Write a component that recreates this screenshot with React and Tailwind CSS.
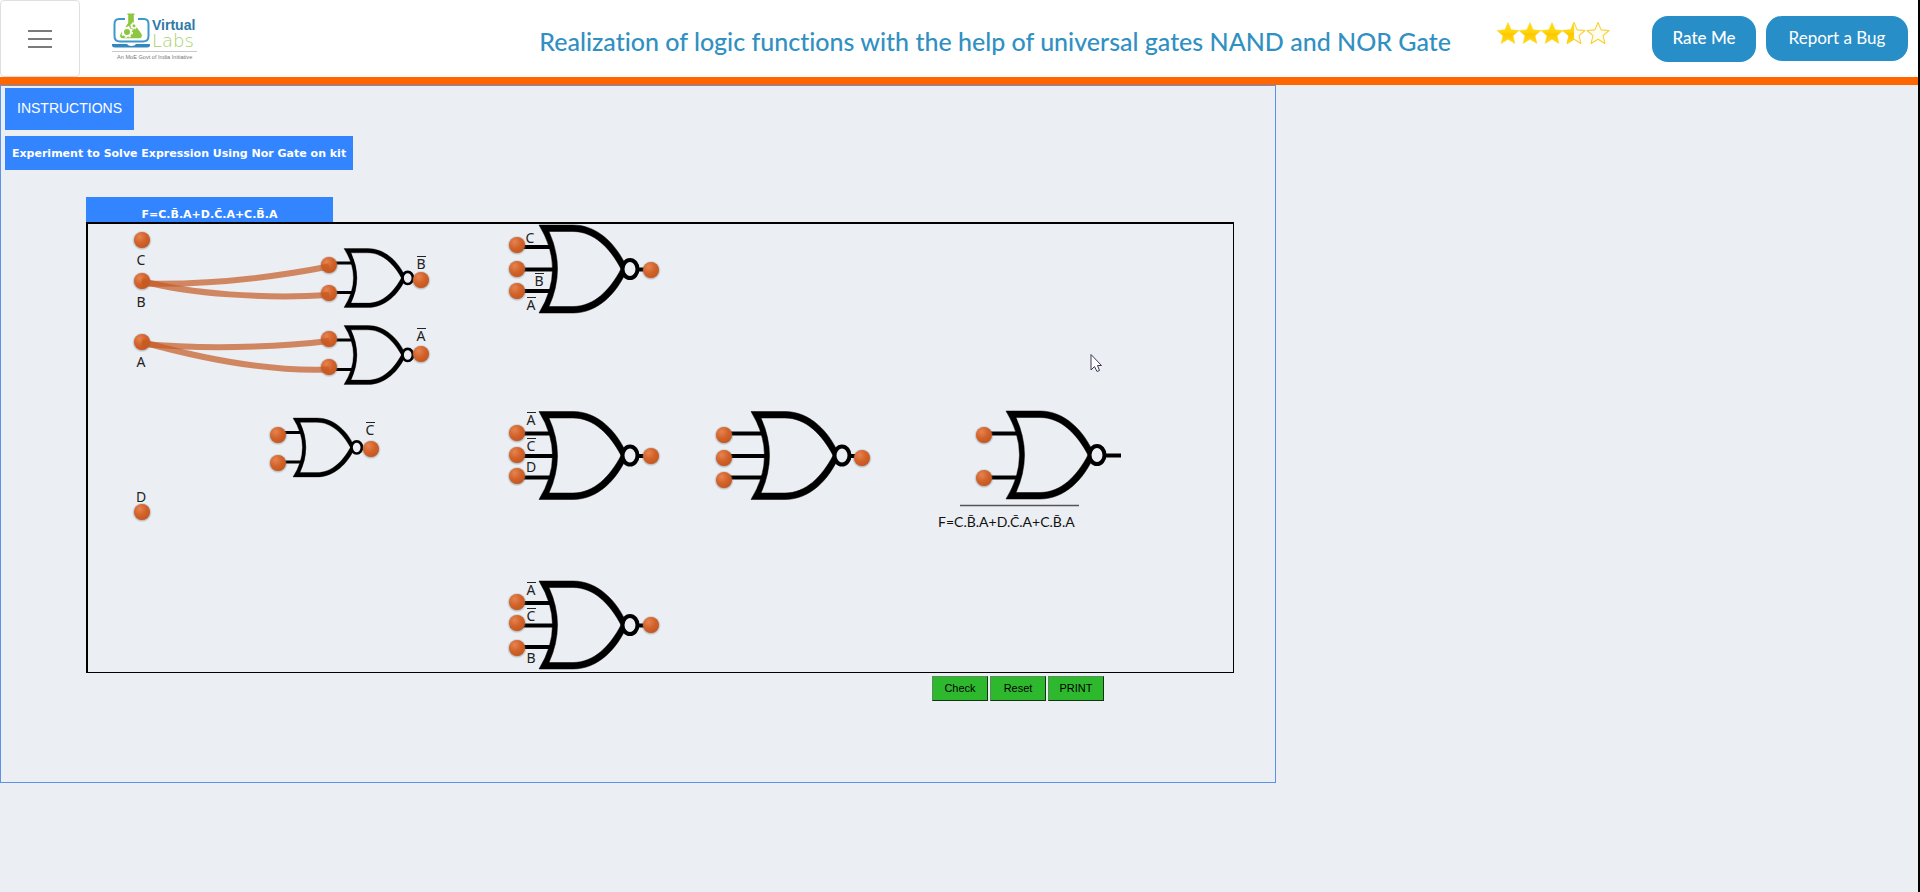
import React from 'react';

const FULL_STAR = 'M11 1 L14 8 L21.5 8.6 L15.8 13.6 L17.6 21 L11 17 L4.4 21 L6.2 13.6 L0.5 8.6 L8 8 Z';

function Star({ fill = 'full' }) {
  return (
    <svg viewBox="0.5 0.5 21 21" className="size-[22px] overflow-visible" aria-hidden="true">
      {fill === 'full' && <path d={FULL_STAR} fill="url(#gold)" stroke="#ffd61a" strokeWidth="0.5" />}
      {fill !== 'full' && (
        <path d={FULL_STAR} fill="#fffdf2" stroke="#f8cf2c" strokeWidth="1" strokeLinejoin="round" />
      )}
      {fill === 'half' && <path d="M11 0 L8 8 L0 8.6 L6.2 13.6 L4.2 21.5 L11 17 Z" fill="url(#gold)" />}
    </svg>
  );
}

function Logo() {
  return (
    <svg viewBox="0 0 88 50" className="h-[50px] w-[88px]" role="img" aria-label="Virtual Labs">
      <path
        d="M13 6 H7 Q2.500 6 2.500 11 V23 Q2.500 28.500 8 28.500 H31 Q36.500 28.500 36.500 23 V11 Q36.500 6 32 6 H26"
        fill="none"
        stroke="#3d98cb"
        strokeWidth="2"
      />
      <path d="M0 31 H15 Q16 33 19.500 33 Q23 33 24 31 H38 V32 Q38 34.500 35 34.500 H3 Q0 34.500 0 32 Z" fill="#3487bd" />
      <path
        d="M15.500 0.500 H22.500 V2 H21.800 V10 L29.500 21 Q31 25 27 25.300 H11 Q7 25 8.500 21 L16.200 10 V2 H15.500 Z"
        fill="#8dc63f"
      />
      <circle cx="15" cy="19" r="4" fill="none" stroke="#fff" strokeWidth="2" />
      <circle cx="15" cy="19" r="5.300" fill="none" stroke="#fff" strokeWidth="1.500" strokeDasharray="2 2.160" />
      <circle cx="22" cy="12.800" r="2.300" fill="none" stroke="#fff" strokeWidth="1.500" />
      <circle cx="22" cy="12.800" r="3.300" fill="none" stroke="#fff" strokeWidth="1" strokeDasharray="1.300 1.290" />
      <text x="40" y="17" fontSize="14" fontWeight="700" fill="#2f79a8" fontFamily="'Liberation Sans', sans-serif">
        Virtual
      </text>
      <text x="40" y="34" fontSize="18" fontWeight="200" fill="#a5cf68" fontFamily="'DejaVu Sans', sans-serif">
        Labs
      </text>
      <path d="M0 38.500 H85" stroke="#c9c9c9" strokeWidth="1" />
      <text x="5" y="46" fontSize="5.600" fill="#777" fontFamily="'Liberation Sans', sans-serif">
        An MoE Govt of India Initiative
      </text>
    </svg>
  );
}

const GATE_BODY =
  'M0 0 H34 C59 0 78 20 88 43 L88 45 C78 68 59 88 34 88 H0 Q27 44 0 0 Z ' +
  'M10 6.500 Q27 44 10 81.500 H34 C55 81.500 71 65 82 44 C71 23 55 6.500 34 6.500 Z';

function NorGate({ x, y, sx = 1, sy = 1 }) {
  return (
    <g transform={`translate(${x} ${y}) scale(${sx} ${sy})`}>
      <path d={GATE_BODY} fillRule="evenodd" stroke="#000" strokeWidth="0.5" />
      <ellipse cx="91" cy="44" rx="7.500" ry="9" fill="#ebeef3" stroke="#000" strokeWidth="4" />
    </g>
  );
}

function SmallGate({ x, y }) {
  return (
    <g>
      <path d={`M${x - 12} ${y + 14.5} h20 M${x - 12} ${y + 44} h20`} stroke="#000" strokeWidth="3" />
      <NorGate x={x} y={y} sx={0.7} sy={0.67} />
    </g>
  );
}

function LargeGate({ x, y, inputs, reach = 29, output = 8 }) {
  return (
    <g>
      {inputs.map((dy) => (
        <path key={dy} d={`M${x - reach} ${y + dy} h${reach + 14}`} stroke="#000" strokeWidth="4" />
      ))}
      <path d={`M${x + 98} ${y + 44.5} h${output}`} stroke="#000" strokeWidth="4" />
      <NorGate x={x} y={y} />
    </g>
  );
}

const WIRES = [
  'M142 283.500 C205 285 270 278 329 266.500',
  'M142 281 C190 294 265 299 329 295',
  'M142 344 C200 349 270 348 329 341',
  'M142 342 C200 358 270 372 329 369.500',
];

const TERMINALS = [
  [142, 240], [142, 281], [142, 342], [142, 512],
  [329, 265], [329, 293], [421, 280],
  [329, 339], [329, 367], [421, 354],
  [278, 435], [278, 463], [371, 449],
  [517, 245], [517, 269], [517, 291], [651, 270],
  [517, 433], [517, 455], [517, 476], [651, 456],
  [724, 435], [724, 458], [724, 480], [862, 458],
  [984, 435], [984, 478],
  [517, 602], [517, 623], [517, 648], [651, 625],
];

const LABELS = [
  [141, 265, 'C'], [141, 307, 'B'], [141, 367, 'A'], [141, 502, 'D'],
  [421, 269, 'B', true], [421, 341, 'A', true], [370, 435, 'C', true],
  [530, 243, 'C'], [539, 286, 'B', true], [531, 310, 'A', true],
  [531, 425, 'A', true], [531, 451, 'C', true], [531, 472, 'D'],
  [531, 595, 'A', true], [531, 621, 'C', true], [531, 663, 'B'],
];

function Circuit() {
  return (
    <svg viewBox="88 224 1145 448" className="block h-auto w-full" role="img" aria-label="NOR gate circuit">
      <defs>
        <radialGradient id="knob" cx="0.35" cy="0.3" r="0.75">
          <stop offset="0" stopColor="#e68350" />
          <stop offset="0.550" stopColor="#d2622a" />
          <stop offset="1" stopColor="#c4561d" />
        </radialGradient>
        <radialGradient id="halo">
          <stop offset="0.700" stopColor="#555" stopOpacity="0.5" />
          <stop offset="1" stopColor="#777" stopOpacity="0" />
        </radialGradient>
      </defs>

      <SmallGate x={344} y={248.5} />
      <SmallGate x={344} y={325.5} />
      <SmallGate x={293} y={418} />
      <LargeGate x={539} y={225} inputs={[22, 44.5, 66]} />
      <LargeGate x={539} y={411.5} inputs={[22, 44.5, 66]} />
      <LargeGate x={751} y={411.5} inputs={[22, 44.5, 66]} />
      <LargeGate x={539} y={581} inputs={[22, 44.5, 66]} />
      <LargeGate x={1006} y={411} inputs={[22.5, 66.5]} output={17} />

      {TERMINALS.map(([x, y]) => (
        <g key={`${x}-${y}`}>
          <circle cx={x} cy={y + 0.5} r="10" fill="url(#halo)" />
          <circle cx={x} cy={y} r="8" fill="url(#knob)" />
        </g>
      ))}
      {WIRES.map((d) => (
        <path key={d} d={d} fill="none" stroke="#c45a22" strokeOpacity="0.7" strokeWidth="6" />
      ))}

      <g fontFamily="'Noto Sans', sans-serif" fontSize="14" fill="#222" textAnchor="middle">
        {LABELS.map(([x, y, name, inverted]) => (
          <g key={`${x}-${y}`}>
            <text x={x} y={y}>{name}</text>
            {inverted && <path d={`M${x - 4} ${y - 12.5} h9`} stroke="#222" strokeWidth="1" />}
          </g>
        ))}
      </g>

      <path d="M960 505.500 H1079" stroke="#555" strokeWidth="1.500" />
      <text x="938" y="527" fontFamily="Lato, 'Noto Sans', sans-serif" fontSize="14" fill="#111">
        F=C.B̄.A+D.C̄.A+C.B̄.A
      </text>

      <path
        d="M1091 354.500 V370 L1094.500 366.500 L1097 371.500 L1099.500 370.500 L1097.500 365.500 H1101.500 Z"
        fill="#fff"
        stroke="#3b3b55"
        strokeWidth="1"
      />
    </svg>
  );
}

function ActionButton({ children }) {
  return (
    <button
      type="button"
      className="h-[25px] w-14 border border-t-[#5b8a5b] border-r-[#123312] border-b-[#123312] border-l-[#5b8a5b] bg-[#2eb82e] text-center text-[11px] text-black"
    >
      {children}
    </button>
  );
}

export default function App() {
  return (
    <div className="min-h-screen border-r-2 border-black bg-[#ebeef3] font-['Liberation_Sans',sans-serif]">
      <svg className="absolute size-0" aria-hidden="true">
        <defs>
          <linearGradient id="gold" x1="0" y1="0" x2="0" y2="1">
            <stop offset="0" stopColor="#ffd91a" />
            <stop offset="0.450" stopColor="#ffd60a" />
            <stop offset="0.550" stopColor="#fdc800" />
            <stop offset="1" stopColor="#ffd91a" />
          </linearGradient>
        </defs>
      </svg>

      <header className="flex h-[85px] items-start border-b-8 border-[#ff6600] bg-white">
        <button
          type="button"
          aria-label="Open menu"
          className="flex h-[77px] w-20 shrink-0 items-center justify-center rounded border border-[#dfdfe1]"
        >
          <svg viewBox="0 0 24 18" className="h-[18px] w-6" aria-hidden="true">
            <path d="M0 1 H24 M0 9 H24 M0 17 H24" stroke="#7b7b7b" strokeWidth="2" />
          </svg>
        </button>
        <a href="#home" className="mt-[13px] ml-8 shrink-0">
          <Logo />
        </a>
        <h1 className="mt-[23px] ml-auto font-[Lato,sans-serif] text-[25px] leading-9 font-medium whitespace-nowrap text-[#3190c2] [font-variant-ligatures:none]">
          Realization of logic functions with the help of universal gates NAND and NOR Gate
        </h1>
        <div className="mt-[22px] ml-[46px] flex shrink-0" role="img" aria-label="Rated 3.5 out of 5">
          <Star />
          <Star />
          <Star />
          <Star fill="half" />
          <span className="ml-[2px]">
            <Star fill="empty" />
          </span>
        </div>
        <div className="mt-4 mr-[10px] ml-[43px] flex shrink-0 gap-[10px] font-[Lato,sans-serif] text-[17px] text-white">
          <button type="button" className="h-[46px] w-[104px] rounded-2xl bg-[#288ec8] pb-[2px] font-medium">
            Rate Me
          </button>
          <button type="button" className="h-[45px] w-[142px] rounded-2xl bg-[#288ec8] pb-[2px]">
            Report a Bug
          </button>
        </div>
      </header>

      <main className="flex w-[1276px] max-w-full flex-col items-start border border-[#5b93ea] px-1 pt-[2px] pb-[81px]">
        <button type="button" className="h-[42px] w-[129px] bg-[#3385ff] pb-[2px] text-sm text-white">
          INSTRUCTIONS
        </button>
        <h2 className="mt-[6px] bg-[#3385ff] px-[7px] pt-[2px] font-['DejaVu_Sans',sans-serif] text-[11px] leading-8 font-bold whitespace-nowrap text-white">
          Experiment to Solve Expression Using Nor Gate on kit
        </h2>

        <section className="mt-[27px] ml-[81px] w-[1148px] max-w-full">
          <h3 className="h-[25px] w-[247px] bg-[#3385ff] pt-[10px] text-center font-['DejaVu_Sans',sans-serif] text-[11px] leading-[15px] font-bold text-white">
            F=C.B̄.A+D.C̄.A+C.B̄.A
          </h3>
          <div className="border border-t-2 border-l-2 border-black">
            <Circuit />
          </div>
          <div className="mt-[3px] mr-[130px] flex justify-end gap-[2px]">
            <ActionButton>Check</ActionButton>
            <ActionButton>Reset</ActionButton>
            <ActionButton>PRINT</ActionButton>
          </div>
        </section>
      </main>
    </div>
  );
}
